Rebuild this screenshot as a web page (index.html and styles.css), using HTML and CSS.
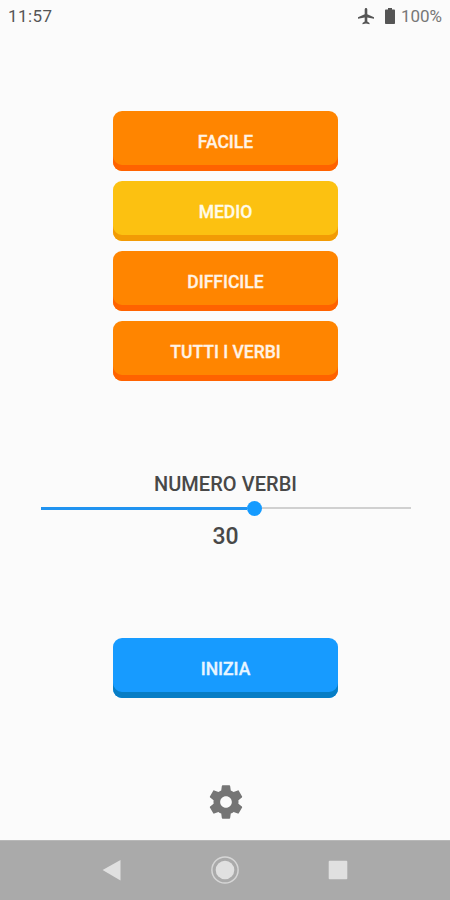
FILE: index.html
```html
<!DOCTYPE html>
<html lang="it">
<head>
<meta charset="utf-8">
<title>Verbi</title>
<link rel="stylesheet" href="styles.css">
</head>
<body>
<div class="screen">
  <header class="status">
    <span class="clock">11:57</span>
    <div class="indicators">
      <svg class="plane" viewBox="0 0 16 17"><path d="M8 0c.8 0 1.300.6 1.300 1.500v4.700L16 9.200v1.500L9.300 9.600v3.900l2.200 1.600v1.200L8 15.600l-3.500.7v-1.200l2.200-1.600V9.600L0 10.700V9.200l6.700-3V1.500C6.700.6 7.200 0 8 0z"/></svg>
      <svg class="battery" viewBox="0 0 10 16"><path d="M3 0h4v1.600h2.200a.8.8 0 0 1 .8.800v12.800a.8.8 0 0 1-.8.800H.8a.8.8 0 0 1-.8-.8V2.400a.8.8 0 0 1 .8-.8H3z"/></svg>
      <span class="percent">100%</span>
    </div>
  </header>
  <main class="content">
    <div class="levels">
      <button class="btn">FACILE</button>
      <button class="btn selected">MEDIO</button>
      <button class="btn">DIFFICILE</button>
      <button class="btn">TUTTI I VERBI</button>
    </div>
    <section class="amount">
      <h2 class="label">NUMERO VERBI</h2>
      <div class="slider"><div class="filled"></div><div class="thumb"></div><div class="rest"></div></div>
      <div class="value">30</div>
    </section>
    <button class="btn start">INIZIA</button>
    <svg class="gear" viewBox="0 0 24 24"><path d="M19.430 12.980c.04-.32.070-.64.070-.98s-.03-.66-.07-.98l2.110-1.650c.19-.15.240-.42.120-.64l-2-3.460c-.12-.22-.39-.3-.61-.22l-2.490 1c-.52-.4-1.080-.73-1.690-.98l-.38-2.650C14.460 2.180 14.250 2 14 2h-4c-.25 0-.46.180-.49.420l-.38 2.650c-.61.250-1.170.590-1.690.980l-2.490-1c-.23-.09-.49 0-.61.220l-2 3.460c-.13.220-.07.490.120.640l2.110 1.650c-.04.320-.07.650-.07.980s.03.660.070.980l-2.110 1.650c-.19.150-.24.420-.12.640l2 3.460c.12.220.390.300.610.220l2.490-1c.52.400 1.080.730 1.690.980l.38 2.650c.03.240.240.420.490.420h4c.25 0 .46-.18.490-.42l.38-2.650c.61-.25 1.170-.59 1.690-.98l2.490 1c.23.090.490 0 .610-.22l2-3.460c.12-.22.070-.49-.12-.64l-2.110-1.650zM12 15.500c-1.930 0-3.500-1.570-3.500-3.500s1.570-3.500 3.500-3.500 3.500 1.570 3.500 3.500-1.570 3.500-3.500 3.500z"/></svg>
  </main>
  <nav class="navbar">
    <svg viewBox="0 0 28 28"><path d="M4.600 14 22.500 4v20.500z"/></svg>
    <svg viewBox="0 0 28 28"><circle cx="14" cy="14" r="9.300"/><circle class="ring" cx="14" cy="14" r="13.100"/></svg>
    <svg viewBox="0 0 28 28"><rect x="4.700" y="4.700" width="18.600" height="18.600" rx="1"/></svg>
  </nav>
</div>
</body>
</html>
```
FILE: styles.css
```css
* { box-sizing: border-box; }
body { margin: 0; font-family: Roboto, sans-serif; background: #fbfbfb; }
.screen { width: 450px; height: 900px; display: flex; flex-direction: column; overflow: hidden; }
.status { height: 32px; flex: none; padding: 0 8px; display: flex; justify-content: space-between; align-items: center; font-size: 17px; }
.clock { color: #555; letter-spacing: .4px; }
.indicators { display: flex; align-items: center; color: #777; }
.plane { width: 16px; height: 17px; fill: #555; margin-right: 11px; }
.battery { width: 10px; height: 16px; fill: #555; margin-right: 6px; }
.content { flex: 1; display: flex; flex-direction: column; align-items: center; padding-top: 79px; }
.levels { display: flex; flex-direction: column; gap: 10px; }
.btn { width: 225px; height: 60px; border: 0; border-radius: 9px; padding: 2px 0 0 1px; background: #ff8500; box-shadow: inset 0 -6px #ff6200; color: #fff3e6; font: 500 17.500px/58px Roboto, sans-serif; -webkit-text-stroke: .3px; text-align: center; }
.btn.selected { background: #fcc111; box-shadow: inset 0 -6px #f29b05; color: #fffbe9; }
.btn.start { background: #179bff; box-shadow: inset 0 -6px #077dc5; color: #e8f5ff; margin-top: 87px; }
.amount { margin-top: 92px; width: 371px; padding-left: 1px; text-align: center; color: #484848; }
.label { margin: 0; font-size: 20px; line-height: 22px; font-weight: 500; letter-spacing: .05px; }
.slider { display: flex; align-items: center; height: 16px; margin-top: 5px; }
.filled { width: 206px; height: 3px; background: #2093f0; }
.thumb { width: 15px; height: 15px; border-radius: 50%; background: #159bff; }
.rest { flex: 1; height: 2px; background: #d0d0d0; }
.value { margin-top: 7px; font-size: 23px; line-height: 28px; font-weight: 500; }
.gear { width: 40px; height: 40px; fill: #757575; margin: 84px 0 0 1px; }
.navbar { height: 60px; flex: none; background: #aaa; border-top: 1px solid #b8b8b8; display: flex; justify-content: space-between; align-items: center; padding: 0 98px 1px 98px; }
.navbar svg { width: 28px; height: 28px; fill: #e0e0e0; }
.navbar .ring { fill: none; stroke: #d6d6d6; stroke-width: 1.5; }
```
